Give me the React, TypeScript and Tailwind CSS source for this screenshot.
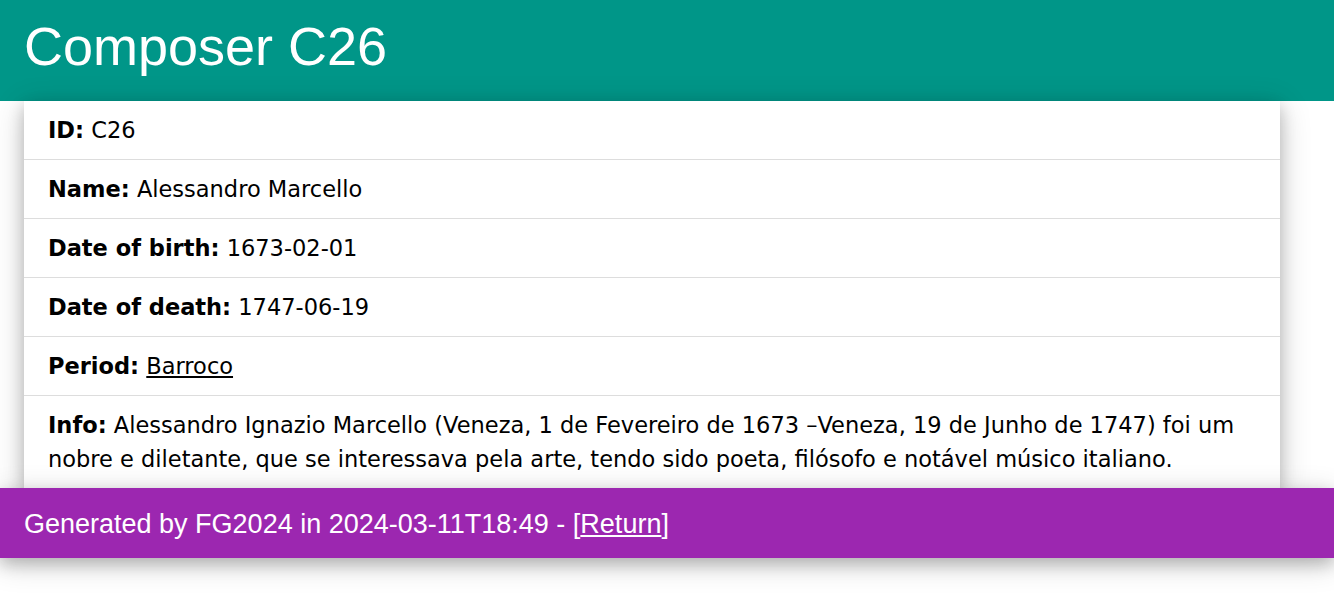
import React from 'react';

interface Field {
  label: string;
  value: React.ReactNode;
}

const fields: Field[] = [
  { label: 'ID:', value: 'C26' },
  { label: 'Name:', value: 'Alessandro Marcello' },
  { label: 'Date of birth:', value: '1673-02-01' },
  { label: 'Date of death:', value: '1747-06-19' },
  {
    label: 'Period:',
    value: (
      <a href="#" className="underline">
        Barroco
      </a>
    ),
  },
  {
    label: 'Info:',
    value:
      'Alessandro Ignazio Marcello (Veneza, 1 de Fevereiro de 1673 \u2013Veneza, 19 de Junho de 1747) foi um nobre e diletante, que se interessava pela arte, tendo sido poeta, filósofo e notável músico italiano.',
  },
];

const cardShadow =
  'shadow-[0_6px_15px_0_rgba(0,0,0,0.2),0_6px_30px_0_rgba(0,0,0,0.19)]';

export default function App() {
  return (
    <div className="min-h-[600px] bg-white font-['DejaVu_Sans',sans-serif] text-black">
      {/* header */}
      <header className="h-[101px] bg-[#009688] px-6 pt-[6px] text-white">
        <h1 className="font-['Liberation_Sans',Arial,sans-serif] text-[54px] leading-[81px] font-normal">
          Composer C26
        </h1>
      </header>

      {/* details card */}
      <ul className={`relative ml-6 w-[1256px] bg-white ${cardShadow}`}>
        {fields.map((f, i) => (
          <li
            key={f.label}
            className={`px-6 py-3 text-[22.5px] leading-[34px] ${
              i < fields.length - 1 ? 'border-b border-[#ddd]' : ''
            }`}
          >
            <b>{f.label}</b> {f.value}
          </li>
        ))}
      </ul>

      {/* footer */}
      <footer className={`relative h-[70px] bg-[#9c27b0] px-6 text-white ${cardShadow}`}>
        <h5 className="pt-[16px] font-['Liberation_Sans',Arial,sans-serif] text-[27px] leading-[40px]">
          Generated by FG2024 in 2024-03-11T18:49 - [
          <a href="#" className="underline">
            Return
          </a>
          ]
        </h5>
      </footer>
    </div>
  );
}
